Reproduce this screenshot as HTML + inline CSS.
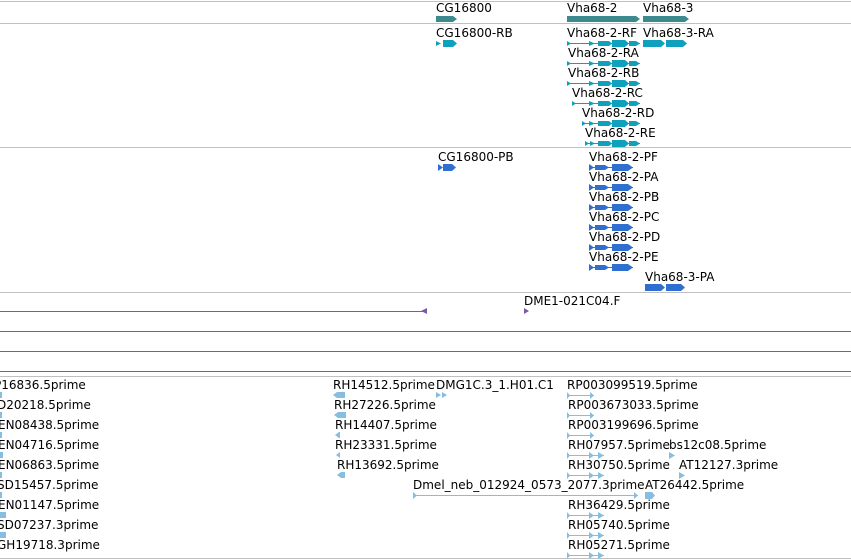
<!DOCTYPE html>
<html><head><meta charset="utf-8">
<style>
html,body{margin:0;padding:0;background:#fff;width:851px;height:560px;overflow:hidden}
svg{display:block}
text{font-family:"DejaVu Sans","Liberation Sans",sans-serif;font-size:12px;fill:#000}
</style></head><body>
<svg width="851" height="560" viewBox="0 0 851 560" xmlns="http://www.w3.org/2000/svg">
<g stroke="#c0c0c0" stroke-width="1">
<line x1="0" y1="1.5" x2="851" y2="1.5"/>
<line x1="0" y1="23.5" x2="851" y2="23.5"/>
<line x1="0" y1="147.5" x2="851" y2="147.5"/>
<line x1="0" y1="292.5" x2="851" y2="292.5"/>
<line x1="0" y1="376.5" x2="851" y2="376.5"/>
<line x1="0" y1="558.5" x2="851" y2="558.5"/>
</g>
<g stroke="#7a5aa8" stroke-width="1">
<line x1="0" y1="331.5" x2="851" y2="331.5"/>
<line x1="0" y1="351.5" x2="851" y2="351.5"/>
<line x1="0" y1="371.5" x2="851" y2="371.5"/>
<line x1="0" y1="311.5" x2="425" y2="311.5"/>
</g>
<polygon points="421,311 427,308 427,314" fill="#7a5aa8"/>
<polygon points="524,308 524,314 529,311" fill="#7a5aa8"/>

<g fill="#3d8a8e">
<polygon points="436,16 453,16 457,19 453,22 436,22"/>
<polygon points="567,16 636,16 640,19 636,22 567,22"/>
<polygon points="643,16 685,16 689,19 685,22 643,22"/>
</g>
<text x="436" y="12">CG16800</text>
<text x="567" y="12">Vha68-2</text>
<text x="643" y="12">Vha68-3</text>

<g fill="#0fa0be" stroke="#0fa0be">
<g id="tr">
<line x1="567" y1="43.5" x2="640" y2="43.5" stroke-width="1"/>
<polygon points="567,41 571,43.5 567,46" stroke="none"/>
<polygon points="589,41 595,43.5 589,46" stroke="none"/>
<polygon points="598,41 609,41 612,43.5 609,46 598,46" stroke="none"/>
<polygon points="612,40 625,40 629,43.5 625,47 612,47" stroke="none"/>
<polygon points="629,41 636,41 640,43.5 636,46 629,46" stroke="none"/>
</g>
<polygon points="436,41 441,43.5 436,46" stroke="none"/>
<polygon points="443,40 453,40 457,43.5 453,47 443,47" stroke="none"/>
<polygon points="643,40 661,40 665,43.5 661,47 643,47" stroke="none"/>
<polygon points="666,40 683,40 687,43.5 683,47 666,47" stroke="none"/>
<use href="#tr" y="20"/>
<use href="#tr" y="40"/>
<g transform="translate(0,60)">
<line x1="572" y1="43.5" x2="640" y2="43.5" stroke-width="1"/>
<polygon points="572,41 576,43.5 572,46" stroke="none"/>
<polygon points="589,41 595,43.5 589,46" stroke="none"/>
<polygon points="598,41 609,41 612,43.5 609,46 598,46" stroke="none"/>
<polygon points="612,40 625,40 629,43.5 625,47 612,47" stroke="none"/>
<polygon points="629,41 636,41 640,43.5 636,46 629,46" stroke="none"/>
</g>
<g transform="translate(0,80)">
<line x1="582" y1="43.5" x2="640" y2="43.5" stroke-width="1"/>
<polygon points="582,41 586,43.5 582,46" stroke="none"/>
<polygon points="589,41 595,43.5 589,46" stroke="none"/>
<polygon points="598,41 609,41 612,43.5 609,46 598,46" stroke="none"/>
<polygon points="612,40 625,40 629,43.5 625,47 612,47" stroke="none"/>
<polygon points="629,41 636,41 640,43.5 636,46 629,46" stroke="none"/>
</g>
<g transform="translate(0,100)">
<line x1="585" y1="43.5" x2="640" y2="43.5" stroke-width="1"/>
<polygon points="585,41 589,43.5 585,46" stroke="none"/>
<polygon points="590,41 595,43.5 590,46" stroke="none"/>
<polygon points="598,41 609,41 612,43.5 609,46 598,46" stroke="none"/>
<polygon points="612,40 625,40 629,43.5 625,47 612,47" stroke="none"/>
<polygon points="629,41 636,41 640,43.5 636,46 629,46" stroke="none"/>
</g>
</g>
<text x="436" y="37">CG16800-RB</text>
<text x="567" y="37">Vha68-2-RF</text>
<text x="643" y="37">Vha68-3-RA</text>
<text x="568" y="57">Vha68-2-RA</text>
<text x="568" y="77">Vha68-2-RB</text>
<text x="572" y="97">Vha68-2-RC</text>
<text x="582" y="117">Vha68-2-RD</text>
<text x="585" y="137">Vha68-2-RE</text>

<g fill="#2f6fd0">
<g id="pr">
<line x1="589" y1="167.5" x2="633" y2="167.5" stroke="#2f6fd0"/>
<polygon points="589,164 594,167.5 589,171"/>
<polygon points="595,165 605,165 609,167.5 605,170 595,170"/>
<polygon points="612,164 628,164 633,167.5 628,171 612,171"/>
</g>
<use href="#pr" y="20"/><use href="#pr" y="40"/><use href="#pr" y="60"/><use href="#pr" y="80"/><use href="#pr" y="100"/>
<polygon points="438,164 443,167.5 438,171"/>
<polygon points="443,164 452,164 456,167.5 452,171 443,171"/>
<polygon points="645,284 661,284 665,287.5 661,291 645,291"/>
<polygon points="666,284 681,284 685,287.5 681,291 666,291"/>
</g>
<text x="438" y="161">CG16800-PB</text>
<text x="589" y="161">Vha68-2-PF</text>
<text x="589" y="181">Vha68-2-PA</text>
<text x="589" y="201">Vha68-2-PB</text>
<text x="589" y="221">Vha68-2-PC</text>
<text x="589" y="241">Vha68-2-PD</text>
<text x="589" y="261">Vha68-2-PE</text>
<text x="645" y="281">Vha68-3-PA</text>
<text x="524" y="305">DME1-021C04.F</text>

<g fill="#86bde0" stroke="#86bde0">
<rect x="0" y="392" width="2" height="6" stroke="none"/>
<rect x="0" y="412" width="2" height="6" stroke="none"/>
<rect x="0" y="432" width="2" height="6" stroke="none"/>
<rect x="0" y="452" width="3" height="6" stroke="none"/>
<rect x="0" y="472" width="2" height="6" stroke="none"/>
<rect x="0" y="492" width="2" height="6" stroke="none"/>
<rect x="0" y="512" width="6" height="6" stroke="none"/>
<rect x="0" y="532" width="6" height="6" stroke="none"/>
<polygon points="333,395 337,392 345,392 345,398 337,398" stroke="none"/>
<polygon points="334,415 338,412 346,412 346,418 338,418" stroke="none"/>
<polygon points="335,435 339,432 340,432 340,438 339,438" stroke="none"/>
<polygon points="336,455 340,452 340,458" stroke="none"/>
<polygon points="337,475 341,472 345,472 345,478 341,478" stroke="none"/>
<polygon points="436,392 441,395 436,398" stroke="none"/>
<polygon points="442,392 447,395 442,398" stroke="none"/>
<g stroke-width="1">
<line x1="567" y1="395.5" x2="594" y2="395.5"/><polygon points="567,392 570,395.5 567,399" stroke="none"/><polygon points="590,392 594,395.5 590,399" stroke="none"/>
<line x1="567" y1="415.5" x2="594" y2="415.5"/><polygon points="567,412 570,415.5 567,419" stroke="none"/><polygon points="590,412 594,415.5 590,419" stroke="none"/>
<line x1="567" y1="435.5" x2="594" y2="435.5"/><polygon points="567,432 570,435.5 567,439" stroke="none"/><polygon points="590,432 594,435.5 590,439" stroke="none"/>
<line x1="567" y1="455.5" x2="604" y2="455.5"/><polygon points="567,452 570,455.5 567,459" stroke="none"/><polygon points="589,452 594,455.5 589,459" stroke="none"/><polygon points="598,452 604,455.5 598,459" stroke="none"/>
<line x1="567" y1="475.5" x2="604" y2="475.5"/><polygon points="567,472 570,475.5 567,479" stroke="none"/><polygon points="589,472 594,475.5 589,479" stroke="none"/><polygon points="598,472 604,475.5 598,479" stroke="none"/>
<line x1="413" y1="495.5" x2="638" y2="495.5"/><polygon points="413,492 417,495.5 413,499" stroke="none"/><polygon points="634,492 638,495.5 634,499" stroke="none"/>
<polygon points="645,492 652,492 655,495.5 652,499 645,499" stroke="none"/>
<polygon points="669,452 675,455.5 669,459" stroke="none"/>
<polygon points="679,472 685,475.5 679,479" stroke="none"/>
<line x1="567" y1="515.5" x2="604" y2="515.5"/><polygon points="567,512 570,515.5 567,519" stroke="none"/><polygon points="589,512 594,515.5 589,519" stroke="none"/><polygon points="598,512 604,515.5 598,519" stroke="none"/>
<line x1="567" y1="535.5" x2="604" y2="535.5"/><polygon points="567,532 570,535.5 567,539" stroke="none"/><polygon points="589,532 594,535.5 589,539" stroke="none"/><polygon points="598,532 604,535.5 598,539" stroke="none"/>
<line x1="567" y1="555.5" x2="604" y2="555.5"/><polygon points="567,552 570,555.5 567,559" stroke="none"/><polygon points="589,552 594,555.5 589,559" stroke="none"/><polygon points="598,552 604,555.5 598,559" stroke="none"/>
</g>
</g>
<text x="-6" y="389">P16836.5prime</text>
<text x="-3" y="409">D20218.5prime</text>
<text x="-2" y="429">EN08438.5prime</text>
<text x="-2" y="449">EN04716.5prime</text>
<text x="-2" y="469">EN06863.5prime</text>
<text x="-3" y="489">SD15457.5prime</text>
<text x="-2" y="509">EN01147.5prime</text>
<text x="-3" y="529">SD07237.3prime</text>
<text x="-3" y="549">GH19718.3prime</text>
<text x="333" y="389">RH14512.5prime</text>
<text x="436" y="389">DMG1C.3_1.H01.C1</text>
<text x="334" y="409">RH27226.5prime</text>
<text x="335" y="429">RH14407.5prime</text>
<text x="335" y="449">RH23331.5prime</text>
<text x="337" y="469">RH13692.5prime</text>
<text x="413" y="489">Dmel_neb_012924_0573_2077.3prime</text>
<text x="567" y="389">RP003099519.5prime</text>
<text x="568" y="409">RP003673033.5prime</text>
<text x="568" y="429">RP003199696.5prime</text>
<text x="568" y="449">RH07957.5prime</text>
<text x="669" y="449">bs12c08.5prime</text>
<text x="568" y="469">RH30750.5prime</text>
<text x="679" y="469">AT12127.3prime</text>
<text x="645" y="489">AT26442.5prime</text>
<text x="568" y="509">RH36429.5prime</text>
<text x="568" y="529">RH05740.5prime</text>
<text x="568" y="549">RH05271.5prime</text>
</svg>
</body></html>
